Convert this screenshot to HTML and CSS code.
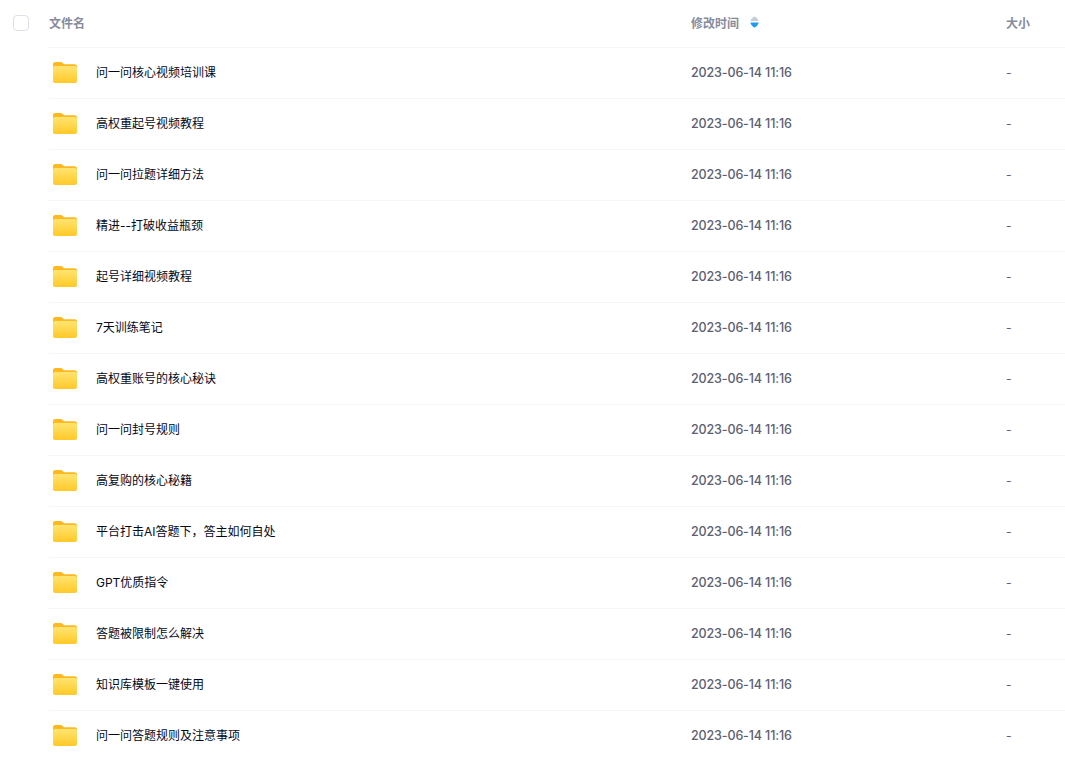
FILE: index.html
```html
<!DOCTYPE html>
<html lang="zh-CN">
<head>
    <meta charset="UTF-8">
    <title>文件列表</title>
    <link rel="stylesheet" href="styles.css">
</head>
<body>
    <svg class="svg-defs" width="0" height="0">
        <defs>
            <linearGradient id="folderFront" x1="0" y1="0" x2="0" y2="1">
                <stop offset="0" stop-color="#ffe471"/>
                <stop offset="1" stop-color="#ffc928"/>
            </linearGradient>
            <symbol id="folder" viewBox="0 0 24 21">
                <path d="M0 2.200C0 1 1 0 2.200 0h5.600c.7 0 1.200.2 1.700.7L11 2.200h10.800C23 2.200 24 3.200 24 4.400v6H0z" fill="#ffb81f"/>
                <path d="M0 6C0 4.900.9 4 2 4h20c1.100 0 2 .9 2 2v13c0 1.100-.9 2-2 2H2c-1.100 0-2-.9-2-2z" fill="url(#folderFront)"/>
            </symbol>
        </defs>
    </svg>

    <div class="file-table">
        <div class="head">
            <span class="checkbox"></span>
            <div class="head-cells">
                <span class="col-name">文件名</span>
                <span class="col-time">修改时间
                    <svg class="sort" width="9" height="12" viewBox="0 0 9 12">
                        <path d="M4.500 0.500C5.500 0.500 8.500 3.500 8.500 5H0.500C0.500 3.500 3.500 0.500 4.500 0.500z" fill="#c9ccd6"/>
                        <path d="M0.500 6.500H8.500C8.500 8.500 5.500 11.500 4.500 11.500C3.500 11.500 0.500 8.500 0.500 6.500z" fill="#1e9bf5"/>
                    </svg>
                </span>
                <span class="col-size">大小</span>
            </div>
        </div>

        <div class="row"><span class="col-name"><svg class="folder"><use href="#folder"/></svg><span class="label">问一问核心视频培训课</span></span><span class="col-time">2023-06-14 11:16</span><span class="col-size">-</span></div>
        <div class="row"><span class="col-name"><svg class="folder"><use href="#folder"/></svg><span class="label">高权重起号视频教程</span></span><span class="col-time">2023-06-14 11:16</span><span class="col-size">-</span></div>
        <div class="row"><span class="col-name"><svg class="folder"><use href="#folder"/></svg><span class="label">问一问拉题详细方法</span></span><span class="col-time">2023-06-14 11:16</span><span class="col-size">-</span></div>
        <div class="row"><span class="col-name"><svg class="folder"><use href="#folder"/></svg><span class="label">精进--打破收益瓶颈</span></span><span class="col-time">2023-06-14 11:16</span><span class="col-size">-</span></div>
        <div class="row"><span class="col-name"><svg class="folder"><use href="#folder"/></svg><span class="label">起号详细视频教程</span></span><span class="col-time">2023-06-14 11:16</span><span class="col-size">-</span></div>
        <div class="row"><span class="col-name"><svg class="folder"><use href="#folder"/></svg><span class="label">7天训练笔记</span></span><span class="col-time">2023-06-14 11:16</span><span class="col-size">-</span></div>
        <div class="row"><span class="col-name"><svg class="folder"><use href="#folder"/></svg><span class="label">高权重账号的核心秘诀</span></span><span class="col-time">2023-06-14 11:16</span><span class="col-size">-</span></div>
        <div class="row"><span class="col-name"><svg class="folder"><use href="#folder"/></svg><span class="label">问一问封号规则</span></span><span class="col-time">2023-06-14 11:16</span><span class="col-size">-</span></div>
        <div class="row"><span class="col-name"><svg class="folder"><use href="#folder"/></svg><span class="label">高复购的核心秘籍</span></span><span class="col-time">2023-06-14 11:16</span><span class="col-size">-</span></div>
        <div class="row"><span class="col-name"><svg class="folder"><use href="#folder"/></svg><span class="label">平台打击AI答题下，答主如何自处</span></span><span class="col-time">2023-06-14 11:16</span><span class="col-size">-</span></div>
        <div class="row"><span class="col-name"><svg class="folder"><use href="#folder"/></svg><span class="label">GPT优质指令</span></span><span class="col-time">2023-06-14 11:16</span><span class="col-size">-</span></div>
        <div class="row"><span class="col-name"><svg class="folder"><use href="#folder"/></svg><span class="label">答题被限制怎么解决</span></span><span class="col-time">2023-06-14 11:16</span><span class="col-size">-</span></div>
        <div class="row"><span class="col-name"><svg class="folder"><use href="#folder"/></svg><span class="label">知识库模板一键使用</span></span><span class="col-time">2023-06-14 11:16</span><span class="col-size">-</span></div>
        <div class="row"><span class="col-name"><svg class="folder"><use href="#folder"/></svg><span class="label">问一问答题规则及注意事项</span></span><span class="col-time">2023-06-14 11:16</span><span class="col-size">-</span></div>
    </div>
</body>
</html>
```

FILE: styles.css
```css
* {
    margin: 0;
    padding: 0;
    box-sizing: border-box;
}

html, body {
    height: 760px;
    overflow: hidden;
}

body {
    background: #fff;
    font-family: Inter, "Noto Sans CJK SC", sans-serif;
    font-size: 12px;
    color: #03081a;
}

.svg-defs {
    display: block;
    height: 0;
}

.file-table {
    padding-left: 13px;
}

/* Header */
.head {
    display: flex;
    align-items: center;
    height: 47px;
    padding-bottom: 1px;
    color: #878c9c;
    font-weight: 600;
}

.checkbox {
    flex: none;
    width: 16px;
    height: 16px;
    margin-right: 20px;
    border: 1px solid #dfe0ea;
    border-radius: 4px;
}

.head-cells {
    flex: 1;
    display: flex;
    align-items: center;
    padding-bottom: 2px;
}

.col-name {
    flex: none;
    width: 642px;
    display: flex;
    align-items: center;
}

.col-time {
    flex: none;
    width: 315px;
    display: flex;
    align-items: center;
}

.sort {
    margin-left: 11px;
}

/* Rows */
.row {
    display: flex;
    align-items: center;
    height: 51px;
    padding-bottom: 2px;
    margin-left: 36px;
    border-top: 1px solid #f5f5f6;
}

.folder {
    flex: none;
    width: 24px;
    height: 21px;
    margin: 0 19px 0 4px;
}

.label {
    padding-bottom: 2px;
}

.row .col-time {
    font-size: 12.5px;
    font-weight: 500;
    letter-spacing: -0.13px;
    color: #5b6073;
}

.row .col-size {
    color: #5b6073;
}
```
